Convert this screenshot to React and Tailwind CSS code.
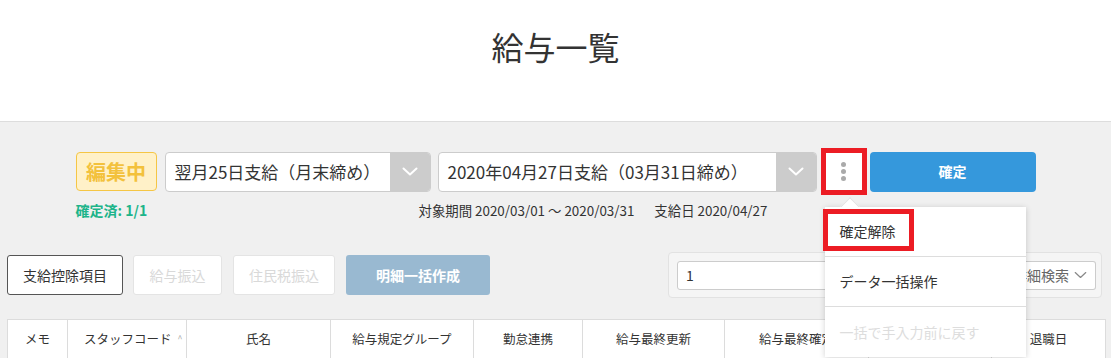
import React from "react";

const Chevron = ({ className = "", color = "#fff", w = 16, h = 9, sw = 2 }) => (
  <svg width={w} height={h} viewBox="0 0 16 9" className={className} fill="none">
    <path d="M1.5 1.5 L8 7.5 L14.5 1.5" stroke={color} strokeWidth={sw} strokeLinecap="round" strokeLinejoin="round" />
  </svg>
);

function Select({ width, text }) {
  return (
    <div className={`flex h-[40px] ${width} overflow-hidden rounded-[4px] border border-[#cccccc] bg-white`}>
      <div className="flex flex-1 items-center pl-[9px] text-[17px] text-[#333]">{text}</div>
      <div className="flex w-[40px] items-center justify-center bg-[#cccccc]">
        <Chevron />
      </div>
    </div>
  );
}

export default function App() {
  const cols = [
    { w: "w-[59px]", t: "メモ" },
    { w: "w-[119px]", t: "スタッフコード", left: true },
    { w: "w-[144px]", t: "氏名" },
    { w: "w-[143px]", t: "給与規定グループ" },
    { w: "w-[109px]", t: "勤怠連携" },
    { w: "w-[142px]", t: "給与最終更新" },
    { w: "w-[144px]", t: "給与最終確定" },
    { w: "w-[123px]", t: "" },
    { w: "flex-1", t: "退職日" },
  ];
  return (
    <div className="h-[358px] w-full overflow-hidden bg-[#f0f0f0] text-[#333]" style={{ fontFamily: '"Noto Sans CJK JP", "Noto Sans", sans-serif' }}>
      <header className="h-[122px] border-b border-[#dddddd] bg-white pt-[22px] text-center text-[32px] leading-[48px] text-[#333]">
        給与一覧
      </header>

      <div className="mx-auto w-[960px] pt-[26px]">
        <div className="flex items-center">
          <div className="flex h-[39px] w-[81px] items-center justify-center rounded-[4px] border border-[#f5c645] bg-[#fff1c8] text-[20px] font-bold text-[#f3c13c]">
            編集中
          </div>
          <div className="ml-[8px]">
            <Select width="w-[266px]" text="翌月25日支給（月末締め）" />
          </div>
          <div className="ml-[7px]">
            <Select width="w-[379px]" text="2020年04月27日支給（03月31日締め）" />
          </div>
          <div className="relative ml-[4px]">
            <div className="flex h-[47px] w-[46px] flex-col items-center justify-center gap-[2px] border-[5px] border-[#ec1c24] bg-white">
              <span className="h-[5px] w-[5px] rounded-full bg-[#aaaaaa]" />
              <span className="h-[5px] w-[5px] rounded-full bg-[#aaaaaa]" />
              <span className="h-[5px] w-[5px] rounded-full bg-[#aaaaaa]" />
            </div>
            <div className="absolute left-[4px] top-[59px] z-10 w-[201px] bg-white shadow-[0_1px_6px_rgba(0,0,0,0.18)]">
              <div className="absolute left-[18px] top-[-7px] h-[14px] w-[14px] rotate-45 border-l border-t border-[#e2e2e2] bg-white" />
              <div className="relative flex h-[50px] items-center border-b border-[#dddddd] bg-white px-[15px] text-[14px] text-[#333]">
                確定解除
                <div className="pointer-events-none absolute left-[-2px] top-[2px] h-[42px] w-[91px] border-[5px] border-[#ec1c24]" />
              </div>
              <div className="flex h-[50px] items-center border-b border-[#dddddd] px-[15px] text-[14px] text-[#333]">
                データ一括操作
              </div>
              <div className="flex h-[50px] items-center px-[15px] text-[14px] text-[#dddddd]">
                一括で手入力前に戻す
              </div>
            </div>
          </div>
          <button className="ml-[3px] flex h-[40px] w-[166px] items-center justify-center rounded-[4px] bg-[#3598dc] text-[14px] font-bold text-white">
            確定
          </button>
        </div>

        <div className="mt-[5px] flex text-[13.4px] leading-[20px]">
          <div className="w-[343px] text-[14px] font-bold text-[#1db48a]">確定済: 1/1</div>
          <div className="text-[#333]">対象期間 2020/03/01 〜 2020/03/31<span className="inline-block w-[20px]" />支給日 2020/04/27</div>
        </div>
      </div>

      <div className="mt-[32px] flex items-center justify-between pl-[7px] pr-[9px]">
        <div className="flex items-center">
          <button className="flex h-[40px] w-[116px] items-center justify-center rounded-[3px] border border-[#555] bg-white text-[14px] text-[#333]">
            支給控除項目
          </button>
          <button className="ml-[10px] flex h-[40px] w-[89px] items-center justify-center rounded-[3px] border border-[#e4e4e4] bg-white text-[14px] text-[#d9d9d9]">
            給与振込
          </button>
          <button className="ml-[11px] flex h-[40px] w-[102px] items-center justify-center rounded-[3px] border border-[#e4e4e4] bg-white text-[14px] text-[#d9d9d9]">
            住民税振込
          </button>
          <button className="ml-[11px] flex h-[40px] w-[144px] items-center justify-center rounded-[3px] bg-[#99b9d1] text-[14px] font-bold text-white">
            明細一括作成
          </button>
        </div>
        <div className="flex h-[46px] w-[434px] items-center rounded-[4px] border border-[#e2e2e2] bg-[#f5f5f5] pl-[8px] pr-[5px]">
          <div className="flex h-[29px] flex-1 items-center rounded-l-[3px] border border-[#cccccc] bg-white pl-[8px] text-[14px] text-[#333]">
            1
          </div>
          <div className="flex h-[29px] w-[110px] items-center justify-end gap-[5px] rounded-r-[3px] border border-l-0 border-[#cccccc] bg-white pr-[8px] text-[14px] text-[#666]">
            詳細検索
            <Chevron color="#888" w={13} h={8} sw={1.5} />
          </div>
        </div>
      </div>

      <div className="mx-[7px] mt-[21px] mr-[5px] flex h-[40px] border border-[#dcdcdc] bg-white text-[12.5px] text-[#333]">
        {cols.map((c, i) => (
          <div
            key={i}
            className={`${c.w} flex items-center ${c.left ? "justify-start pl-[16px]" : "justify-center"} ${i > 0 ? "border-l border-[#dcdcdc]" : ""}`}
          >
            {c.t}
            {c.left && <span className="ml-[6px] text-[9px] text-[#aaa]">^</span>}
          </div>
        ))}
      </div>
    </div>
  );
}
